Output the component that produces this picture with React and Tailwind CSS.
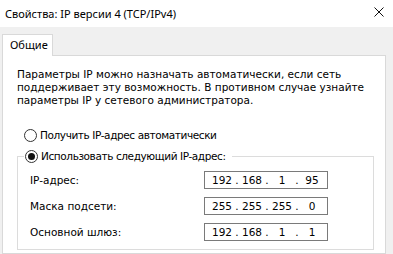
import React from "react";

function IpBox({ parts }) {
  return (
    <div className="w-[124px] h-[18px] border border-[#7a7a7a] bg-white flex items-center pl-[5px]">
      {parts.map((p, i) => (
        <React.Fragment key={i}>
          <span className="w-[24px] text-center">{p}</span>
          {i < 3 && <span className="w-[6px] text-center">.</span>}
        </React.Fragment>
      ))}
    </div>
  );
}

function Radio({ checked }) {
  return (
    <span className="w-[13px] h-[13px] rounded-full border border-[#333] bg-white flex items-center justify-center shrink-0">
      {checked && <span className="w-[7px] h-[7px] rounded-full bg-[#111]" />}
    </span>
  );
}

export default function App() {
  const body = { fontFamily: '"DejaVu Sans", sans-serif' };
  const ui = { fontFamily: '"Noto Sans", "Open Sans", sans-serif' };
  return (
    <div className="w-[393px] h-[254px] bg-[#f0f0f0] overflow-hidden flex flex-col text-black">
      <div className="h-[27px] bg-white flex items-center justify-between pl-[5px] pr-[9px] shrink-0">
        <span className="text-[11px] leading-none" style={ui}>
          Свойства: IP версии 4 (TCP/IPv4)
        </span>
        <svg width="10" height="10" viewBox="0 0 10 10" className="mb-[3px]">
          <path d="M0.5 0.5 L9.5 9.5 M9.5 0.5 L0.5 9.5" stroke="#111" strokeWidth="1" />
        </svg>
      </div>
      <div className="flex-1 flex flex-col pt-[7px] pl-[2px] pr-[7px]">
        <div className="flex">
          <div
            className="w-[51px] h-[22px] bg-white border border-b-0 border-[#d9d9d9] flex items-center pl-[7px] text-[11px] relative z-10 -mb-px"
            style={ui}
          >
            Общие
          </div>
        </div>
        <div className="flex-1 bg-white border border-[#d9d9d9] pl-[14px] pr-[11px] pt-[12px] text-[10.5px] leading-[13px]" style={body}>
          <p>
            Параметры IP можно назначать автоматически, если сеть
            <br />
            поддерживает эту возможность. В противном случае узнайте
            <br />
            параметры IP у сетевого администратора.
          </p>
          <div className="mt-[21px] ml-[7px] flex items-center gap-[3px] h-[14px]">
            <Radio />
            <span className="tracking-[-0.4px]">Получить IP-адрес автоматически</span>
          </div>
          <fieldset className="mt-[7px] border border-[#dcdcdc] pl-0 pr-[44px] pb-[8px]">
            <legend className="ml-[6px] px-[1px]">
              <span className="flex items-center gap-[3px] h-[14px]">
                <Radio checked />
                <span className="pr-[5px] tracking-[-0.4px]">Использовать следующий IP-адрес:</span>
              </span>
            </legend>
            <div className="flex flex-col gap-[8px] pt-[8px] pl-[12px]">
              <div className="flex items-center">
                <span className="w-[174px]">IP-адрес:</span>
                <IpBox parts={["192", "168", "1", "95"]} />
              </div>
              <div className="flex items-center">
                <span className="w-[174px]">Маска подсети:</span>
                <IpBox parts={["255", "255", "255", "0"]} />
              </div>
              <div className="flex items-center">
                <span className="w-[174px]">Основной шлюз:</span>
                <IpBox parts={["192", "168", "1", "1"]} />
              </div>
            </div>
          </fieldset>
        </div>
      </div>
    </div>
  );
}
